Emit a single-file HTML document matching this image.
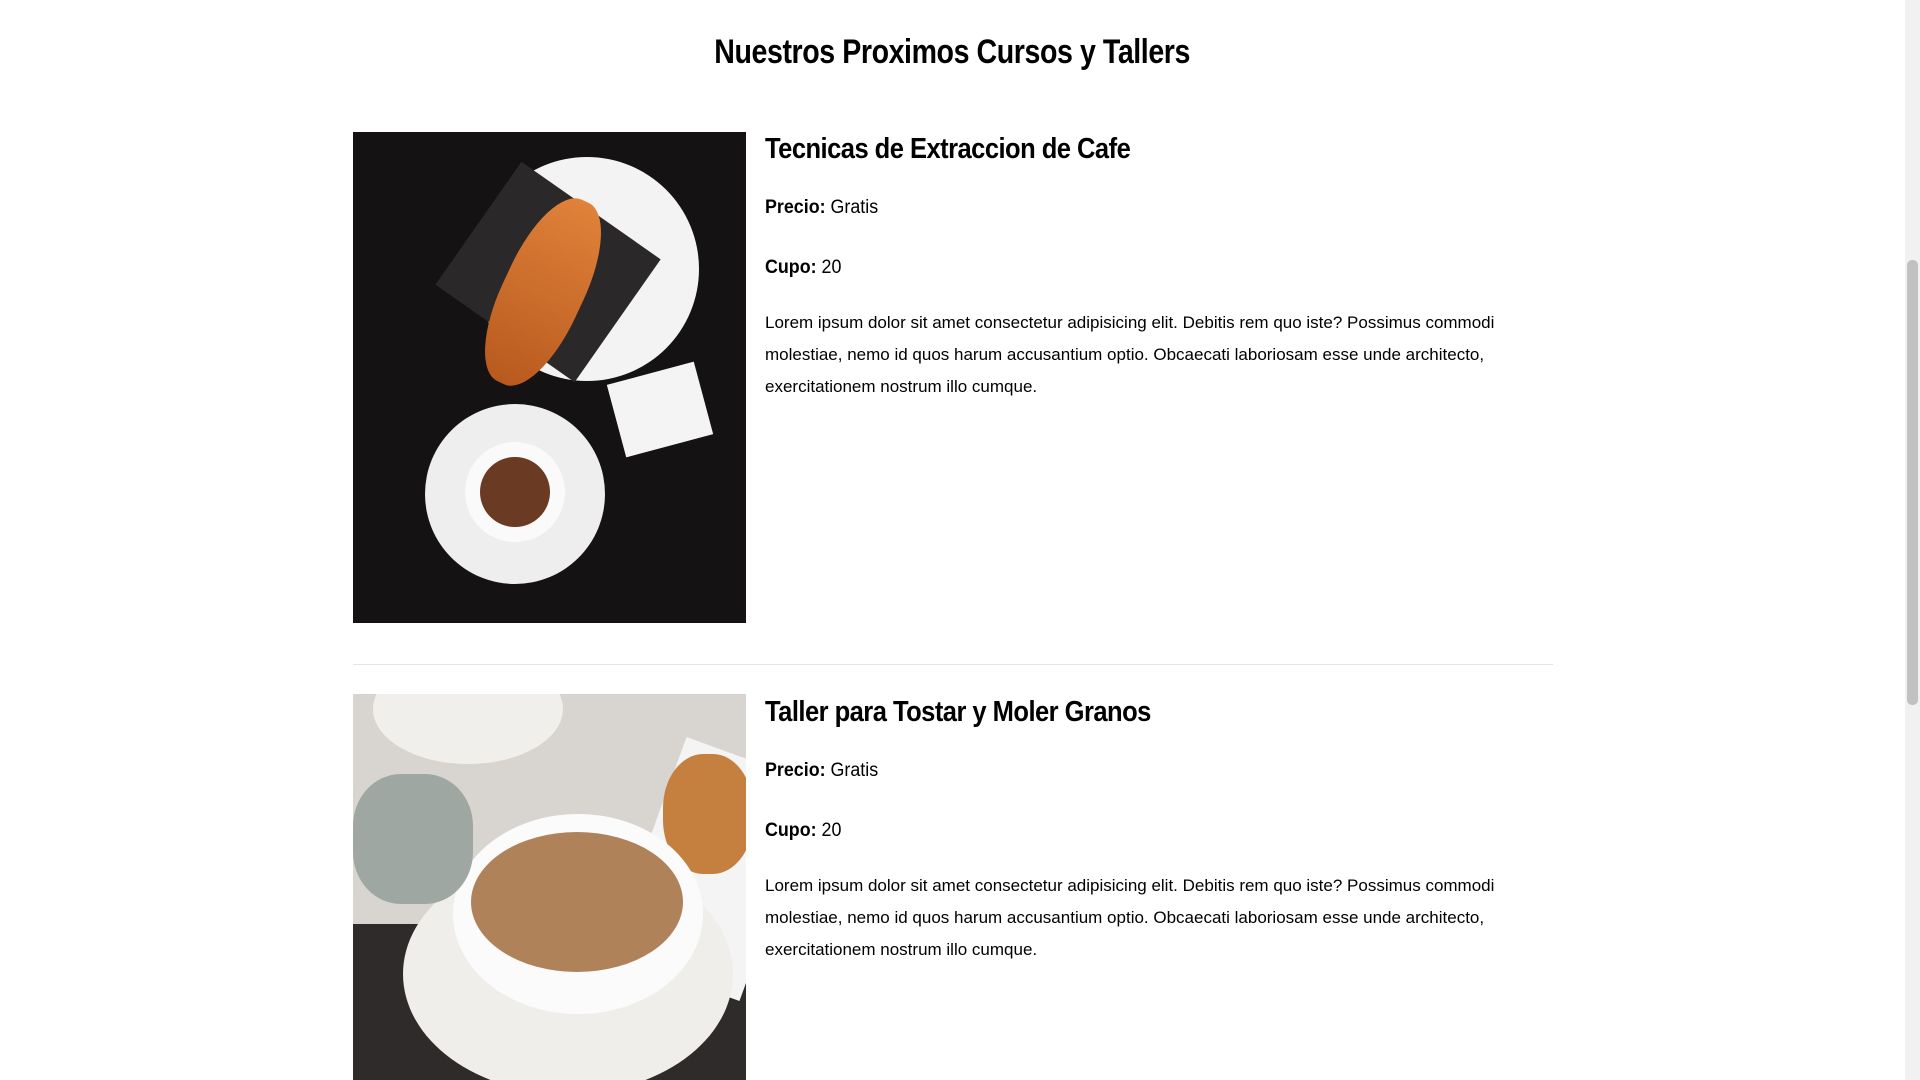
<!DOCTYPE html>
<html><head><meta charset="utf-8"><style>
html,body{margin:0;padding:0;background:#fff;width:1920px;height:1080px;overflow:hidden;font-family:"Liberation Sans",sans-serif;color:#000}
h1{position:absolute;left:0;width:1905px;top:33px;margin:0;text-align:center;font-size:34px;font-weight:bold;letter-spacing:-0.5px}
h1 span{display:inline-block;transform:scaleX(0.84)}
.img{position:absolute;left:353px;width:393px;overflow:hidden}
.t{position:absolute;left:765px;}
.h{font-size:29px;font-weight:bold;letter-spacing:-0.6px;margin:0;transform:scaleX(0.88);transform-origin:left;white-space:nowrap}
.p{font-size:19px;position:absolute;left:765px;transform:scaleX(0.94);transform-origin:left}
.d{position:absolute;left:765px;width:740px;font-size:17px;line-height:32px}
.hr{position:absolute;left:353px;width:1200px;top:664px;height:1px;background:#e5e5e5}
.sb{position:absolute;right:0;top:0;width:15px;height:1080px;background:#f1f1f1}
.th{position:absolute;right:2px;width:11px;top:260px;height:445px;background:#c1c1c1;border-radius:5px}
</style></head><body>
<h1><span>Nuestros Proximos Cursos y Tallers</span></h1>

<div class="img" style="top:132px;height:491px;background:#141213">
 <div style="position:absolute;left:122px;top:25px;width:224px;height:224px;border-radius:50%;background:#f3f3f3"></div>
 <div style="position:absolute;left:110px;top:65px;width:170px;height:150px;background:#2a2828;transform:rotate(35deg)"></div>
 <div style="position:absolute;left:150px;top:60px;width:80px;height:200px;border-radius:45%;background:linear-gradient(#e0823a,#b85a1e);transform:rotate(25deg)"></div>
 <div style="position:absolute;left:72px;top:272px;width:180px;height:180px;border-radius:50%;background:#eee"></div>
 <div style="position:absolute;left:112px;top:310px;width:100px;height:100px;border-radius:50%;background:#fafafa"></div>
 <div style="position:absolute;left:127px;top:325px;width:70px;height:70px;border-radius:50%;background:#6a3a22"></div>
 <div style="position:absolute;left:262px;top:240px;width:90px;height:75px;background:#f4f4f4;transform:rotate(-15deg)"></div>
</div>
<div class="t" style="top:133px"><p class="h">Tecnicas de Extraccion de Cafe</p></div>
<div class="p" style="top:197px"><b>Precio:</b> Gratis</div>
<div class="p" style="top:257px"><b>Cupo:</b> 20</div>
<div class="d" style="top:307px">Lorem ipsum dolor sit amet consectetur adipisicing elit. Debitis rem quo iste? Possimus commodi molestiae, nemo id quos harum accusantium optio. Obcaecati laboriosam esse unde architecto, exercitationem nostrum illo cumque.</div>

<div class="hr"></div>

<div class="img" style="top:694px;height:386px;background:#d8d4cf">
 <div style="position:absolute;left:0;top:230px;width:393px;height:160px;background:#2e2b2a"></div>
 <div style="position:absolute;left:290px;top:60px;width:140px;height:230px;background:#f4f4f4;transform:rotate(20deg)"></div>
 <div style="position:absolute;left:310px;top:60px;width:90px;height:120px;border-radius:45%;background:#c58040"></div>
 <div style="position:absolute;left:20px;top:-40px;width:190px;height:110px;border-radius:50%;background:#f1efec"></div>
 <div style="position:absolute;left:50px;top:160px;width:330px;height:240px;border-radius:50%;background:#f0eeeb"></div>
 <div style="position:absolute;left:100px;top:120px;width:250px;height:200px;border-radius:50%;background:#fbfbfb"></div>
 <div style="position:absolute;left:118px;top:138px;width:212px;height:140px;border-radius:50%;background:#b0825a"></div>
 <div style="position:absolute;left:0;top:80px;width:120px;height:130px;border-radius:40%;background:#9fa7a2"></div>
</div>
<div class="t" style="top:696px"><p class="h">Taller para Tostar y Moler Granos</p></div>
<div class="p" style="top:760px"><b>Precio:</b> Gratis</div>
<div class="p" style="top:820px"><b>Cupo:</b> 20</div>
<div class="d" style="top:870px">Lorem ipsum dolor sit amet consectetur adipisicing elit. Debitis rem quo iste? Possimus commodi molestiae, nemo id quos harum accusantium optio. Obcaecati laboriosam esse unde architecto, exercitationem nostrum illo cumque.</div>

<div class="sb"><div class="th"></div></div>
</body></html>
